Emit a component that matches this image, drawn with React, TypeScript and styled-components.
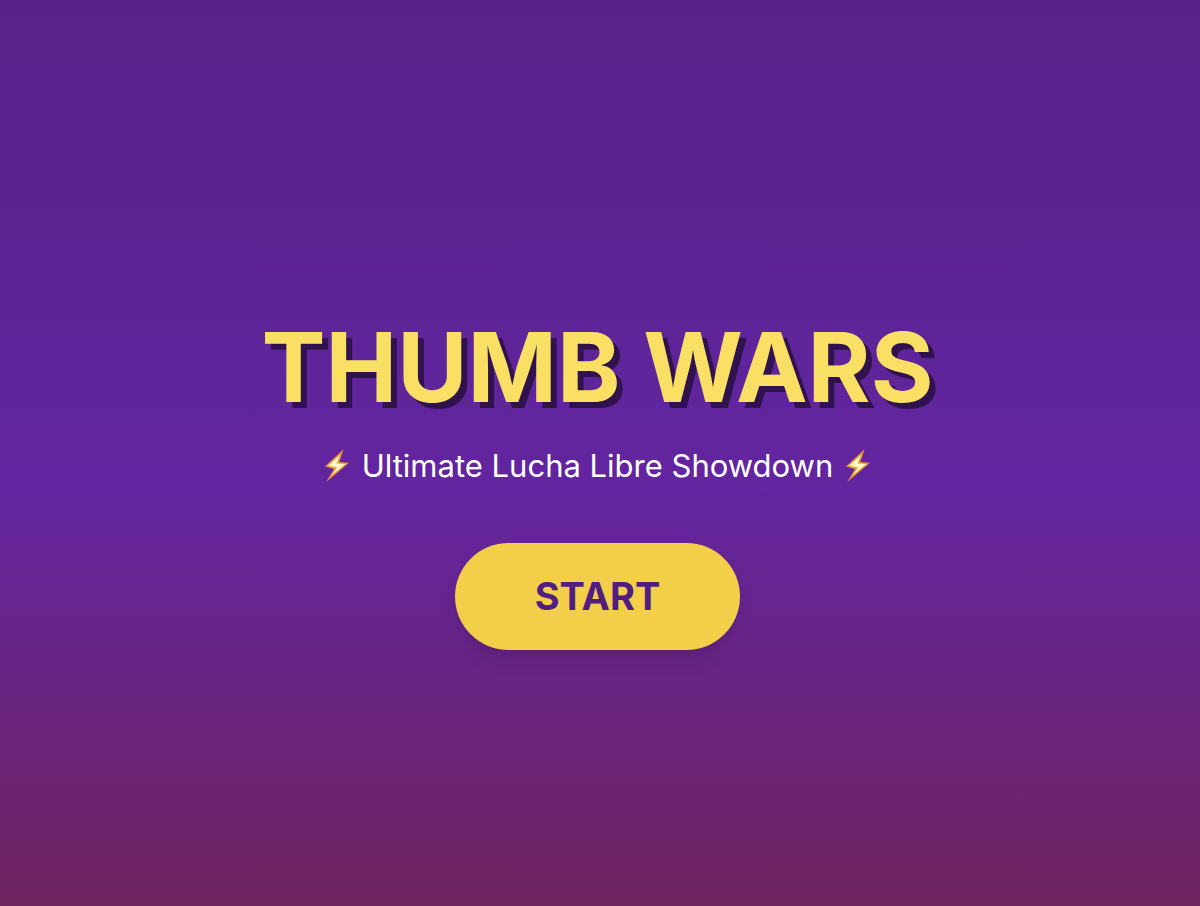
import React from "react";
import styled, { createGlobalStyle } from "styled-components";

const GlobalStyle = createGlobalStyle`
  *, *::before, *::after { box-sizing: border-box; }
  body { margin: 0; font-family: Inter, "Liberation Sans", sans-serif; }
`;

const Screen = styled.main`
  display: flex;
  flex-direction: column;
  align-items: center;
  justify-content: center;
  min-height: 100vh;
  padding: 62px 5px 0 0;
  text-align: center;
  background: linear-gradient(180deg, #562288 0%, #6325a0 54%, #702460 100%);
`;

const Title = styled.h1`
  margin: 0 0 26px;
  color: #f9e065;
  font-size: 96px;
  font-weight: 700;
  line-height: 98px;
  text-shadow: 6px 6px 0 #30124e;
`;

const Tagline = styled.p`
  display: flex;
  align-items: center;
  gap: 12px;
  margin: 0 0 53px;
  color: #fff;
  font-size: 31px;
  line-height: 48px;
`;

const BoltIcon = styled.svg`
  width: 26px;
  height: 34px;
  flex: none;
`;

const StartButton = styled.button`
  padding: 27px 80px;
  border: 0;
  border-radius: 54px;
  background: #f3ce49;
  color: #521d80;
  font-family: inherit;
  font-size: 38px;
  font-weight: 700;
  line-height: 53px;
  cursor: pointer;
  box-shadow: 0 14px 20px -4px rgba(0, 0, 0, 0.1), 0 5px 8px -3px rgba(0, 0, 0, 0.05);
`;

function Bolt() {
  return (
    <BoltIcon viewBox="0 0 26 34" aria-hidden="true">
      <path d="M19.5 .3 L1 17.5 L10 20 L2.2 33 L25 13.8 L15.3 13 Z" fill="#e99a2c" />
      <path d="M16 6 L4 16.7 L13 18.6 L7.5 26.5 L21.5 15 L12.8 14.5 Z" fill="#fff6c8" />
    </BoltIcon>
  );
}

export default function App() {
  return (
    <>
      <GlobalStyle />
      <Screen>
        <Title>THUMB WARS</Title>
        <Tagline>
          <Bolt />
          <span>Ultimate Lucha Libre Showdown</span>
          <Bolt />
        </Tagline>
        <StartButton type="button">START</StartButton>
      </Screen>
    </>
  );
}
